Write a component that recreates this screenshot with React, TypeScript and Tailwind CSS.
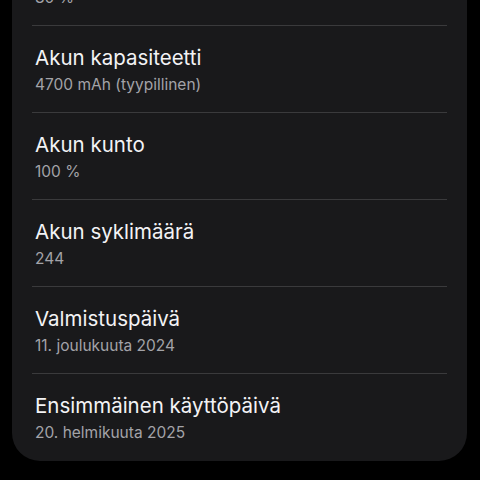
import React from 'react';

type InfoRow = { title: string; value: string };

const rows: InfoRow[] = [
  { title: 'Akun kapasiteetti', value: '4700 mAh (tyypillinen)' },
  { title: 'Akun kunto', value: '100 %' },
  { title: 'Akun syklimäärä', value: '244' },
  { title: 'Valmistuspäivä', value: '11. joulukuuta 2024' },
  { title: 'Ensimmäinen käyttöpäivä', value: '20. helmikuuta 2025' },
];

const RowBody: React.FC<{ row: InfoRow }> = ({ row }) => (
  <div className="h-[86px] pl-[23px] pt-[19px]">
    <div className="text-[20.5px] leading-[26px] text-[#f3f3f5]">{row.title}</div>
    <div className="mt-[4px] text-[15.5px] leading-[20px] text-[#a3a3a8]">{row.value}</div>
  </div>
);

const App: React.FC = () => {
  return (
    <div
      className="flex min-h-screen w-full flex-col bg-black"
      style={{ fontFamily: 'Inter, "Noto Sans", sans-serif' }}
    >
      <div className="ml-3 mr-[13px] -mt-[61px] rounded-b-[28px] bg-[#19191b] pb-[1px]">
        <RowBody row={{ title: 'Akun lataustaso', value: '80 %' }} />
        {rows.map((row) => (
          <div key={row.title} className="flex flex-col">
            <div className="mx-5 h-px bg-[#3a3a3c]" />
            <RowBody row={row} />
          </div>
        ))}
      </div>
    </div>
  );
};

export default App;
